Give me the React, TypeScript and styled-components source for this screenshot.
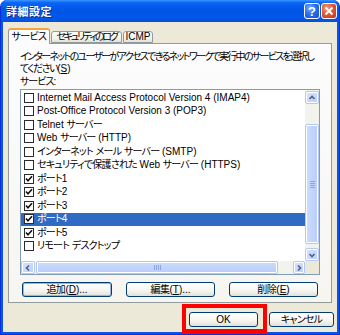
import React from "react";
import styled, { createGlobalStyle } from "styled-components";

const UI = `"Liberation Sans Narrow", "Liberation Sans", "Noto Sans CJK JP", sans-serif`;

const Global = createGlobalStyle`
  html, body { margin: 0; padding: 0; background: #ffffff; }
  body { font-family: ${UI}; }
  * { box-sizing: border-box; }
`;

const Window = styled.div`
  width: 340px;
  height: 335px;
  display: flex;
  flex-direction: column;
  background: #0a55e3;
  border: 1px solid #0831d9;
  border-top: none;
  border-radius: 7px 7px 0 0;
  overflow: hidden;
`;

const TitleBar = styled.div`
  height: 22px;
  margin: 0 -1px;
  flex: none;
  display: flex;
  align-items: center;
  padding: 0 3px 0 6px;
  background: linear-gradient(
    to bottom,
    #3d95ff 0%,
    #0a66f5 12%,
    #0055e5 45%,
    #0058ea 80%,
    #0a4fd6 100%
  );
`;

const Title = styled.div`
  flex: 1;
  color: #ffffff;
  font: bold 11px/1 "Noto Sans CJK JP", sans-serif;
  text-shadow: 1px 1px 0 #0b2b8f;
  letter-spacing: 0.5px;
`;

const CapButton = styled.div<{ $kind: "help" | "close" }>`
  width: 16px;
  height: 16px;
  margin-left: 1px;
  border: 1px solid #ffffff;
  border-radius: 3px;
  display: flex;
  align-items: center;
  justify-content: center;
  background: ${(p) =>
    p.$kind === "close"
      ? "radial-gradient(circle at 35% 30%, #f49a7c 0%, #e35a35 45%, #c2341a 100%)"
      : "radial-gradient(circle at 35% 30%, #7fb0ff 0%, #2a6cf0 45%, #1a4fd0 100%)"};
  color: #ffffff;
  font: bold 13px/1 "Liberation Sans", sans-serif;
`;

const Client = styled.div`
  flex: 1;
  margin: 0 2px 2px;
  background: #ece9d8;
  display: flex;
  flex-direction: column;
  padding: 6px 5px 0 5px;
  min-height: 0;
`;

const TabStrip = styled.div`
  height: 15px;
  display: flex;
  align-items: flex-end;
  flex: none;
`;

const Tab = styled.div<{ $active?: boolean; $w: number }>`
  position: relative;
  width: ${(p) => p.$w}px;
  height: ${(p) => (p.$active ? 16 : 12)}px;
  margin-bottom: ${(p) => (p.$active ? -1 : 0)}px;
  margin-right: 1px;
  z-index: ${(p) => (p.$active ? 2 : 1)};
  border: 1px solid #919b9c;
  border-bottom: ${(p) => (p.$active ? "none" : "1px solid #919b9c")};
  border-top: ${(p) => (p.$active ? "2px solid #f5a33b" : "1px solid #919b9c")};
  border-radius: 3px 3px 0 0;
  background: ${(p) =>
    p.$active ? "#fcfcfe" : "linear-gradient(#ffffff, #f2f1ea 70%, #e3e0d2)"};
  display: flex;
  align-items: center;
  justify-content: center;
  font: 10px/1 ${UI};
  font-feature-settings: "palt";
  color: #000;
  white-space: nowrap;
  overflow: hidden;
  padding-bottom: ${(p) => (p.$active ? 1 : 0)}px;
`;

const Panel = styled.div`
  height: 260px;
  flex: none;
  border: 1px solid #919b9c;
  background: linear-gradient(#fcfcfe, #f6f5f0);
  padding: 7px 11px 5px 11px;
  display: flex;
  flex-direction: column;
`;

const Text = styled.div`
  font: 10px/12px ${UI};
  font-feature-settings: "palt";
  color: #000;
  white-space: nowrap;
`;

const Desc = styled(Text)`
  margin-bottom: 1px;
`;

/* a run of Japanese text, tightened to the narrow kana of the original UI font */
const J = styled.span<{ $ls: number }>`
  letter-spacing: ${(p) => p.$ls}px;
`;

const U = styled.span`
  text-decoration: underline;
`;

const ListBox = styled.div`
  margin-top: 1px;
  height: 186px;
  flex: none;
  border: 1px solid #7f9db9;
  background: #ffffff;
  display: grid;
  grid-template-columns: 1fr 14px;
  grid-template-rows: 1fr 13px;
`;

const Rows = styled.div`
  padding-top: 1px;
  overflow: hidden;
`;

const Row = styled.div<{ $selected?: boolean }>`
  height: 13.5px;
  display: flex;
  align-items: center;
  padding-left: 3px;
  background: ${(p) => (p.$selected ? "#316ac5" : "transparent")};
  color: ${(p) => (p.$selected ? "#ffffff" : "#000000")};
  font: 10px/1 ${UI};
  font-feature-settings: "palt";
  white-space: pre;
`;

const Label = styled.span`
  white-space: pre;
`;

const Box = styled.span`
  width: 10px;
  height: 10px;
  flex: none;
  border: 1px solid #2b2b2b;
  background: #ffffff;
  margin-right: 3px;
  display: flex;
  align-items: center;
  justify-content: center;
`;

const VScroll = styled.div`
  background: #f3f3ee;
  display: flex;
  flex-direction: column;
  padding: 1px 0 0 0;
`;

const HScroll = styled.div`
  background: #f3f3ee;
  display: flex;
  align-items: stretch;
`;

const Corner = styled.div`
  background: #ece9d8;
`;

const ArrowBtn = styled.div<{ $w?: number; $h?: number }>`
  width: ${(p) => (p.$w ? `${p.$w}px` : "100%")};
  height: ${(p) => (p.$h ? `${p.$h}px` : "100%")};
  flex: none;
  border-radius: 2px;
  border: 1px solid #b4c8f6;
  box-shadow: inset 0 0 0 1px #ffffff;
  background: linear-gradient(135deg, #d6e3fe, #bccffb);
  display: flex;
  align-items: center;
  justify-content: center;
`;

const VTrack = styled.div`
  flex: 1;
  display: flex;
  flex-direction: column;
  padding-top: 20px;
`;

const Thumb = styled.div<{ $len: number; $horizontal?: boolean }>`
  ${(p) => (p.$horizontal ? `width: ${p.$len}px;` : `height: ${p.$len}px;`)}
  flex: none;
  border-radius: 2px;
  border: 1px solid #b4c8f6;
  box-shadow: inset 0 0 0 1px #ffffff;
  background: linear-gradient(${(p) => (p.$horizontal ? "180deg" : "90deg")}, #cddcfd, #b9cdfb);
  display: flex;
  align-items: center;
  justify-content: center;
`;

const HTrack = styled.div`
  flex: 1;
  display: flex;
  padding-left: 1px;
`;

const ButtonRow = styled.div`
  margin-top: 7px;
  display: flex;
  justify-content: space-between;
  padding: 0 2px;
`;

const Btn = styled.div<{ $w: number; $focus?: boolean }>`
  width: ${(p) => p.$w}px;
  height: 15px;
  flex: none;
  border: 1px solid #003c74;
  border-radius: 3px;
  background: linear-gradient(#ffffff 0%, #f5f4ef 60%, #e3e0d4 100%);
  box-shadow: ${(p) => (p.$focus ? "inset 0 0 0 1px #97b6e8" : "none")};
  display: flex;
  align-items: center;
  justify-content: center;
  font: 10px/1 ${UI};
  font-feature-settings: "palt";
  color: #000;
  white-space: nowrap;
`;

const BottomRow = styled.div`
  margin-top: 1px;
  display: flex;
  justify-content: flex-end;
  align-items: flex-start;
  margin-right: -2px;
`;

const Highlight = styled.div`
  border: 4px solid #ff0000;
  padding: 4px 5px 2px 3px;
`;

const CancelWrap = styled.div`
  margin-top: 8px;
  margin-left: 2px;
`;

const CJK = /([\u3000-\u30ff\u4e00-\u9fff\uff00-\uffef]+)/;

function jp(text: string, ls: number) {
  return text
    .split(CJK)
    .filter((s) => s.length > 0)
    .map((s, i) =>
      CJK.test(s) ? (
        <J key={i} $ls={ls}>
          {s}
        </J>
      ) : (
        <React.Fragment key={i}>{s}</React.Fragment>
      )
    );
}

const Check = () => (
  <svg width="8" height="8" viewBox="0 0 8 8">
    <path d="M1 3.5 L3 5.8 L7 1.2" fill="none" stroke="#111" strokeWidth="1.6" />
  </svg>
);

const Arrow = ({ dir }: { dir: "up" | "down" | "left" | "right" }) => {
  const d = {
    up: "M1.5 5 L4 2.5 L6.5 5",
    down: "M1.5 3 L4 5.5 L6.5 3",
    left: "M5 1.5 L2.5 4 L5 6.5",
    right: "M3 1.5 L5.5 4 L3 6.5",
  }[dir];
  return (
    <svg width="8" height="8" viewBox="0 0 8 8">
      <path d={d} fill="none" stroke="#4d6185" strokeWidth="1.6" />
    </svg>
  );
};

const Grip = ({ horizontal }: { horizontal?: boolean }) => (
  <svg width="7" height="7" viewBox="0 0 7 7">
    {[0.5, 2.5, 4.5, 6.5].map((v) =>
      horizontal ? (
        <line key={v} x1={v} y1="1" x2={v} y2="6" stroke="#8aa6e6" strokeWidth="1" />
      ) : (
        <line key={v} x1="1" y1={v} x2="6" y2={v} stroke="#8aa6e6" strokeWidth="1" />
      )
    )}
  </svg>
);

const services: { label: string; checked?: boolean; selected?: boolean }[] = [
  { label: "Internet Mail Access Protocol Version 4 (IMAP4)" },
  { label: "Post-Office Protocol Version 3 (POP3)" },
  { label: "Telnet サーバー" },
  { label: "Web サーバー (HTTP)" },
  { label: "インターネット メール サーバー (SMTP)" },
  { label: "セキュリティで保護された Web サーバー (HTTPS)" },
  { label: "ポート1", checked: true },
  { label: "ポート2", checked: true },
  { label: "ポート3", checked: true },
  { label: "ポート4", checked: true, selected: true },
  { label: "ポート5", checked: true },
  { label: "リモート デスクトップ" },
];

export default function App() {
  return (
    <>
      <Global />
      <Window>
        <TitleBar>
          <Title>詳細設定</Title>
          <CapButton $kind="help">?</CapButton>
          <CapButton $kind="close">
            <svg width="10" height="10" viewBox="0 0 10 10">
              <path d="M1.5 1.5 L8.5 8.5 M8.5 1.5 L1.5 8.5" stroke="#fff" strokeWidth="2" />
            </svg>
          </CapButton>
        </TitleBar>
        <Client>
          <TabStrip>
            <Tab $active $w={42}>
              {jp("サービス", -0.6)}
            </Tab>
            <Tab $w={71}>{jp("セキュリティのログ", -2.2)}</Tab>
            <Tab $w={30}>ICMP</Tab>
          </TabStrip>
          <Panel>
            <Desc>
              {jp("インターネットのユーザーがアクセスできるネットワークで実行中のサービスを選択し", -1.7)}
              <br />
              {jp("てください", -1.4)}(<U>S</U>)
            </Desc>
            <Text>{jp("サービス", -1)}:</Text>
            <ListBox>
              <Rows>
                {services.map((s) => (
                  <Row key={s.label} $selected={s.selected}>
                    <Box>{s.checked ? <Check /> : null}</Box>
                    <Label>{jp(s.label, -0.8)}</Label>
                  </Row>
                ))}
              </Rows>
              <VScroll>
                <ArrowBtn $h={13}>
                  <Arrow dir="up" />
                </ArrowBtn>
                <VTrack>
                  <Thumb $len={120}>
                    <Grip />
                  </Thumb>
                </VTrack>
                <ArrowBtn $h={13}>
                  <Arrow dir="down" />
                </ArrowBtn>
              </VScroll>
              <HScroll>
                <ArrowBtn $w={14}>
                  <Arrow dir="left" />
                </ArrowBtn>
                <HTrack>
                  <Thumb $len={242} $horizontal>
                    <Grip horizontal />
                  </Thumb>
                </HTrack>
                <ArrowBtn $w={12}>
                  <Arrow dir="right" />
                </ArrowBtn>
              </HScroll>
              <Corner />
            </ListBox>
            <ButtonRow>
              <Btn $w={90} $focus>
                {jp("追加", -0.5)}(<U>D</U>)...
              </Btn>
              <Btn $w={89}>
                {jp("編集", -0.5)}(<U>T</U>)...
              </Btn>
              <Btn $w={89}>
                {jp("削除", -0.5)}(<U>E</U>)
              </Btn>
            </ButtonRow>
          </Panel>
          <BottomRow>
            <Highlight>
              <Btn $w={69}>OK</Btn>
            </Highlight>
            <CancelWrap>
              <Btn $w={65}>{jp("キャンセル", -0.8)}</Btn>
            </CancelWrap>
          </BottomRow>
        </Client>
      </Window>
    </>
  );
}
